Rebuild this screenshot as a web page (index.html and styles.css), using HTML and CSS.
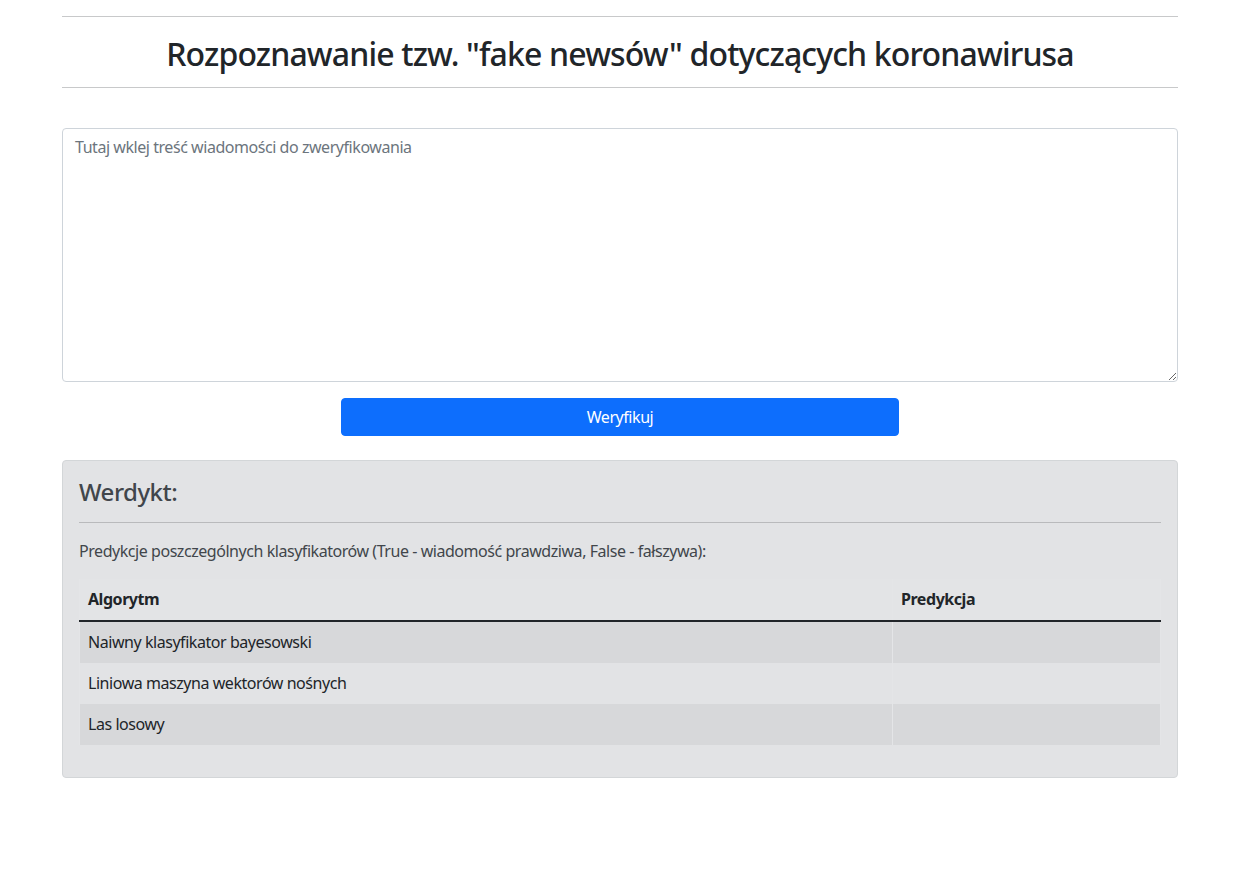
FILE: index.html
```html
<!DOCTYPE html>
<html lang="pl">
<head>
<meta charset="utf-8">
<title>Rozpoznawanie fake newsów</title>
<link rel="stylesheet" href="styles.css">
</head>
<body>
<div class="container">
  <header class="page-header">
    <hr class="rule">
    <h1 class="title">Rozpoznawanie tzw. "fake newsów" dotyczących koronawirusa</h1>
    <hr class="rule">
  </header>
  <form class="form">
    <textarea class="input" placeholder="Tutaj wklej treść wiadomości do zweryfikowania"></textarea>
    <div class="actions">
      <button type="button" class="btn">Weryfikuj</button>
    </div>
  </form>
  <section class="verdict">
    <h4 class="verdict-title">Werdykt:</h4>
    <hr class="verdict-rule">
    <p class="verdict-text">Predykcje poszczególnych klasyfikatorów (True - wiadomość prawdziwa, False - fałszywa):</p>
    <table class="results">
      <thead>
        <tr><th class="col-alg">Algorytm</th><th class="col-pred">Predykcja</th></tr>
      </thead>
      <tbody>
        <tr class="odd"><td class="col-alg">Naiwny klasyfikator bayesowski</td><td class="col-pred"></td></tr>
        <tr><td class="col-alg">Liniowa maszyna wektorów nośnych</td><td class="col-pred"></td></tr>
        <tr class="odd"><td class="col-alg">Las losowy</td><td class="col-pred"></td></tr>
      </tbody>
    </table>
  </section>
</div>
</body>
</html>
```
FILE: styles.css
```css
* { box-sizing: border-box; }
body {
  margin: 0;
  font-family: "Noto Sans", "Open Sans", sans-serif;
  font-size: 16px;
  line-height: 1.5;
  letter-spacing: -0.45px;
  color: #212529;
  background: #fff;
}
.container {
  width: 1116px;
  margin: 0 auto;
}
.rule {
  margin: 16px 0 0;
  border: 0;
  border-top: 1px solid #c8c9ca;
  height: 0;
}
.page-header .rule:last-child { margin-top: 0; }
.title {
  margin: 0;
  padding: 18px 0 14px;
  text-align: center;
  font-size: 32px;
  font-weight: 500;
  line-height: 38px;
  letter-spacing: -0.85px;
}
.form { margin-top: 40px; }
.input {
  display: block;
  width: 100%;
  height: 254px;
  padding: 6px 12px;
  font: inherit;
  letter-spacing: inherit;
  color: #212529;
  border: 1px solid #ced4da;
  border-radius: 4px;
  resize: vertical;
}
.input::placeholder { color: #6c757d; }
.actions {
  display: flex;
  justify-content: center;
  margin-top: 16px;
}
.btn {
  width: 558px;
  height: 38px;
  font: inherit;
  letter-spacing: inherit;
  color: #fff;
  background: #0d6efd;
  border: 1px solid #0d6efd;
  border-radius: 4px;
  padding: 6px 12px;
}
.verdict {
  margin-top: 24px;
  padding: 16px;
  background: #e2e3e5;
  border: 1px solid #d3d6d8;
  border-radius: 4px;
  color: #41464b;
}
.verdict-title {
  margin: 0;
  font-size: 24px;
  font-weight: 500;
  line-height: 29px;
  letter-spacing: -0.5px;
}
.verdict-rule {
  margin: 16px 0;
  border: 0;
  border-top: 1px solid #b9babc;
  height: 0;
}
.verdict-text { margin: 0 0 16px; }
.results {
  width: 100%;
  border-collapse: collapse;
  margin-bottom: 16px;
  color: #212529;
}
.results th, .results td {
  text-align: left;
  padding: 8px;
  vertical-align: top;
  border-left: 1px solid #e4e5e7;
  border-right: 1px solid #e4e5e7;
}
.results th {
  font-weight: 700;
  padding-bottom: 9px;
  border-bottom: 2px solid #212529;
  background: #e3e4e6;
}
.results td {
  border-bottom: 1px solid transparent;
  background: #e2e3e5;
}
.results .odd td { background: #d7d8da; }
.results .col-alg { width: 813px; }
```
